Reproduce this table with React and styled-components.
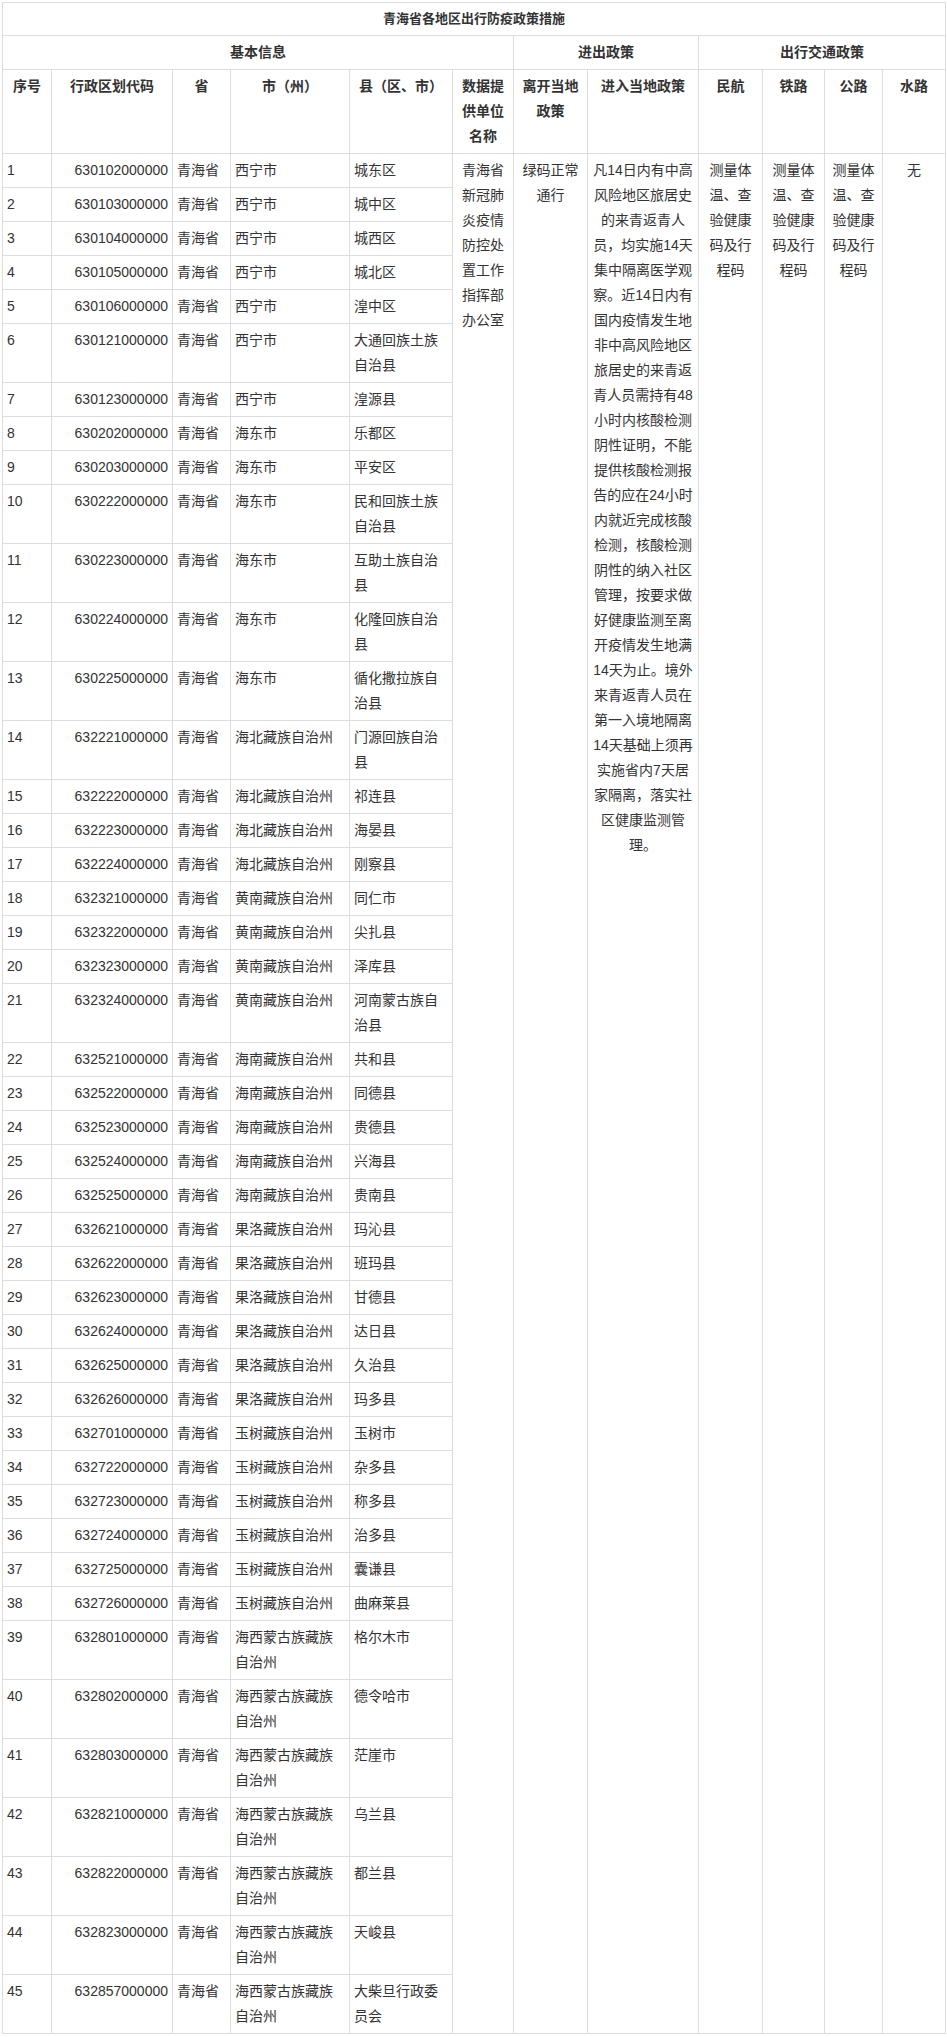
import React from 'react';
import styled, { createGlobalStyle } from 'styled-components';

const GlobalStyle = createGlobalStyle`
  html, body {
    margin: 0;
    padding: 0;
    background: #fff;
  }
  body {
    font-family: "Liberation Sans", "Noto Sans CJK SC", sans-serif;
    color: #333;
  }
`;

const Page = styled.div`
  padding: 2px 2px 4px 2px;
`;

const Table = styled.table`
  width: 943px;
  table-layout: fixed;
  border-collapse: collapse;
  font-family: "Liberation Sans", "Noto Sans CJK SC", sans-serif;
  font-size: 14px;
  line-height: 25px;
  color: #333;
`;

const Cell = styled.td`
  border: 1px solid #dcdcdc;
  padding: 4px 4px;
  vertical-align: top;
  text-align: ${props => props.align || 'left'};
  font-weight: ${props => (props.bold ? 'bold' : 'normal')};
  word-break: break-all;
`;

const TitleCell = styled(Cell)`
  font-size: 13px;
  line-height: 24px;
  text-align: center;
  font-weight: bold;
`;

const Line = styled.span`
  display: block;
  white-space: nowrap;
`;

const widths = [49, 121, 58, 119, 103, 61, 74, 111, 64, 62, 58, 63];

const rows = [
  ['1', '630102000000', '青海省', '西宁市', '城东区'],
  ['2', '630103000000', '青海省', '西宁市', '城中区'],
  ['3', '630104000000', '青海省', '西宁市', '城西区'],
  ['4', '630105000000', '青海省', '西宁市', '城北区'],
  ['5', '630106000000', '青海省', '西宁市', '湟中区'],
  ['6', '630121000000', '青海省', '西宁市', '大通回族土族自治县'],
  ['7', '630123000000', '青海省', '西宁市', '湟源县'],
  ['8', '630202000000', '青海省', '海东市', '乐都区'],
  ['9', '630203000000', '青海省', '海东市', '平安区'],
  ['10', '630222000000', '青海省', '海东市', '民和回族土族自治县'],
  ['11', '630223000000', '青海省', '海东市', '互助土族自治县'],
  ['12', '630224000000', '青海省', '海东市', '化隆回族自治县'],
  ['13', '630225000000', '青海省', '海东市', '循化撒拉族自治县'],
  ['14', '632221000000', '青海省', '海北藏族自治州', '门源回族自治县'],
  ['15', '632222000000', '青海省', '海北藏族自治州', '祁连县'],
  ['16', '632223000000', '青海省', '海北藏族自治州', '海晏县'],
  ['17', '632224000000', '青海省', '海北藏族自治州', '刚察县'],
  ['18', '632321000000', '青海省', '黄南藏族自治州', '同仁市'],
  ['19', '632322000000', '青海省', '黄南藏族自治州', '尖扎县'],
  ['20', '632323000000', '青海省', '黄南藏族自治州', '泽库县'],
  ['21', '632324000000', '青海省', '黄南藏族自治州', '河南蒙古族自治县'],
  ['22', '632521000000', '青海省', '海南藏族自治州', '共和县'],
  ['23', '632522000000', '青海省', '海南藏族自治州', '同德县'],
  ['24', '632523000000', '青海省', '海南藏族自治州', '贵德县'],
  ['25', '632524000000', '青海省', '海南藏族自治州', '兴海县'],
  ['26', '632525000000', '青海省', '海南藏族自治州', '贵南县'],
  ['27', '632621000000', '青海省', '果洛藏族自治州', '玛沁县'],
  ['28', '632622000000', '青海省', '果洛藏族自治州', '班玛县'],
  ['29', '632623000000', '青海省', '果洛藏族自治州', '甘德县'],
  ['30', '632624000000', '青海省', '果洛藏族自治州', '达日县'],
  ['31', '632625000000', '青海省', '果洛藏族自治州', '久治县'],
  ['32', '632626000000', '青海省', '果洛藏族自治州', '玛多县'],
  ['33', '632701000000', '青海省', '玉树藏族自治州', '玉树市'],
  ['34', '632722000000', '青海省', '玉树藏族自治州', '杂多县'],
  ['35', '632723000000', '青海省', '玉树藏族自治州', '称多县'],
  ['36', '632724000000', '青海省', '玉树藏族自治州', '治多县'],
  ['37', '632725000000', '青海省', '玉树藏族自治州', '囊谦县'],
  ['38', '632726000000', '青海省', '玉树藏族自治州', '曲麻莱县'],
  ['39', '632801000000', '青海省', '海西蒙古族藏族自治州', '格尔木市'],
  ['40', '632802000000', '青海省', '海西蒙古族藏族自治州', '德令哈市'],
  ['41', '632803000000', '青海省', '海西蒙古族藏族自治州', '茫崖市'],
  ['42', '632821000000', '青海省', '海西蒙古族藏族自治州', '乌兰县'],
  ['43', '632822000000', '青海省', '海西蒙古族藏族自治州', '都兰县'],
  ['44', '632823000000', '青海省', '海西蒙古族藏族自治州', '天峻县'],
  ['45', '632857000000', '青海省', '海西蒙古族藏族自治州', '大柴旦行政委员会'],
];

const agency = ['青海省', '新冠肺', '炎疫情', '防控处', '置工作', '指挥部', '办公室'];
const leaving = ['绿码正常', '通行'];
const entering = [
  '凡14日内有中高',
  '风险地区旅居史',
  '的来青返青人',
  '员，均实施14天',
  '集中隔离医学观',
  '察。近14日内有',
  '国内疫情发生地',
  '非中高风险地区',
  '旅居史的来青返',
  '青人员需持有48',
  '小时内核酸检测',
  '阴性证明，不能',
  '提供核酸检测报',
  '告的应在24小时',
  '内就近完成核酸',
  '检测，核酸检测',
  '阴性的纳入社区',
  '管理，按要求做',
  '好健康监测至离',
  '开疫情发生地满',
  '14天为止。境外',
  '来青返青人员在',
  '第一入境地隔离',
  '14天基础上须再',
  '实施省内7天居',
  '家隔离，落实社',
  '区健康监测管',
  '理。',
];
const transport = ['测量体', '温、查', '验健康', '码及行', '程码'];

const Lines = ({ items }) => items.map(text => <Line key={text}>{text}</Line>);

const headers = ['序号', '行政区划代码', '省', '市（州）', '县（区、市）', '数据提供单位名称', '离开当地政策', '进入当地政策', '民航', '铁路', '公路', '水路'];

const App = () => (
  <Page>
    <GlobalStyle />
    <Table>
      <colgroup>
        {widths.map((w, i) => (
          <col key={i} style={{ width: w }} />
        ))}
      </colgroup>
      <tbody>
        <tr>
          <TitleCell colSpan={12}>青海省各地区出行防疫政策措施</TitleCell>
        </tr>
        <tr>
          <Cell colSpan={6} align="center" bold>基本信息</Cell>
          <Cell colSpan={2} align="center" bold>进出政策</Cell>
          <Cell colSpan={4} align="center" bold>出行交通政策</Cell>
        </tr>
        <tr>
          {headers.map(h => (
            <Cell key={h} align="center" bold>{h}</Cell>
          ))}
        </tr>
        {rows.map(([no, code, prov, city, county], i) => (
          <tr key={no}>
            <Cell>{no}</Cell>
            <Cell align="right">{code}</Cell>
            <Cell>{prov}</Cell>
            <Cell>{city}</Cell>
            <Cell>{county}</Cell>
            {i === 0 && (
              <>
                <Cell rowSpan={rows.length} align="center"><Lines items={agency} /></Cell>
                <Cell rowSpan={rows.length} align="center"><Lines items={leaving} /></Cell>
                <Cell rowSpan={rows.length} align="center"><Lines items={entering} /></Cell>
                <Cell rowSpan={rows.length} align="center"><Lines items={transport} /></Cell>
                <Cell rowSpan={rows.length} align="center"><Lines items={transport} /></Cell>
                <Cell rowSpan={rows.length} align="center"><Lines items={transport} /></Cell>
                <Cell rowSpan={rows.length} align="center">无</Cell>
              </>
            )}
          </tr>
        ))}
      </tbody>
    </Table>
  </Page>
);

export default App;
